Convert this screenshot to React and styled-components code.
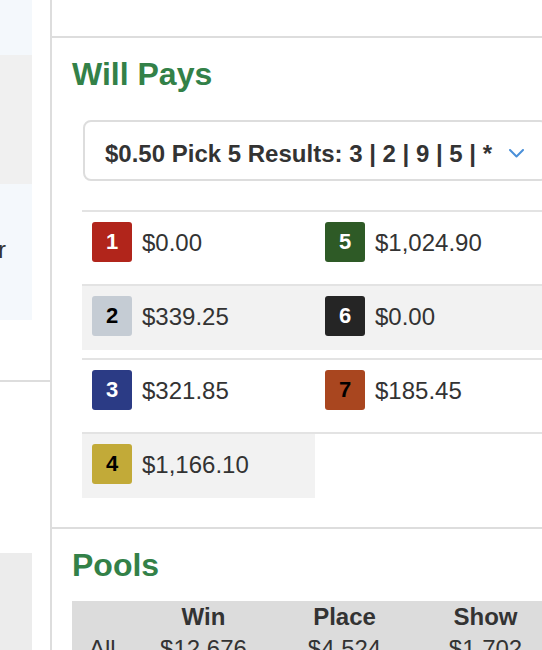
import styled, { createGlobalStyle } from 'styled-components';

const GlobalStyle = createGlobalStyle`
  html, body {
    margin: 0;
    padding: 0;
    background: #ffffff;
    overflow: hidden;
  }
  body {
    font-family: "Liberation Sans", Arial, Helvetica, sans-serif;
    color: #333333;
  }
`;

const Page = styled.div`
  display: flex;
  align-items: stretch;
  width: 640px;
  height: 700px;
`;

const SideColumn = styled.aside`
  flex: none;
  width: 50px;
  border-right: 2px solid #dddddd;
  display: flex;
  flex-direction: column;
  overflow: hidden;
`;

const SidePanel = styled.div`
  flex: none;
  width: 32px;
  height: ${(p) => p.$h}px;
  background: ${(p) => (p.$tone === 'blue' ? '#f4f8fc' : '#f0f0f0')};
  display: flex;
  justify-content: flex-end;
  align-items: center;
  overflow: hidden;
  box-sizing: border-box;
  padding: 0 26px 4px 0;
  font-size: 24px;
  white-space: nowrap;
`;

const SideSection = styled.div`
  margin-top: 60px;
  border-top: 2px solid #dddddd;
  flex: 1;
  display: flex;
  flex-direction: column;
`;

const SideCard = styled.div`
  margin-top: 171px;
  width: 32px;
  flex: 1;
  background: #ececec;
`;

const Main = styled.main`
  flex: none;
  width: 560px;
`;

const TopGap = styled.div`
  height: 36px;
`;

const Section = styled.section`
  border-top: 2px solid #dddddd;
  padding: 17px 0 21px 20px;
`;

const Heading = styled.h2`
  margin: 0;
  font-size: 32px;
  line-height: 38px;
  font-weight: 700;
  color: #338148;
`;

const Dropdown = styled.div`
  box-sizing: border-box;
  margin: 27px 0 0 11px;
  width: 465px;
  height: 61px;
  border: 2px solid #dddddd;
  border-radius: 8px;
  padding: 6px 22px 0 20px;
  display: flex;
  align-items: center;
  justify-content: space-between;
  font-size: 24px;
  font-weight: 700;
  color: #333333;
  white-space: nowrap;
`;

const Chevron = () => (
  <svg width="15" height="9" viewBox="0 0 15 9" fill="none">
    <polyline
      points="1,1 7.5,7.5 14,1"
      stroke="#4a90d9"
      strokeWidth="2"
      strokeLinecap="round"
      strokeLinejoin="round"
    />
  </svg>
);

const PayTable = styled.div`
  margin: 29px 0 0 10px;
  width: 466px;
`;

const PayRow = styled.div`
  display: grid;
  grid-template-columns: 233px 233px;
  border-top: 2px solid #e3e3e3;
  padding-bottom: 8px;
`;

const PayCell = styled.div`
  box-sizing: border-box;
  height: 64px;
  padding: 10px;
  display: flex;
  align-items: flex-start;
  gap: 10px;
  background: ${(p) => (p.$shaded ? '#f2f2f2' : 'transparent')};
`;

const Badge = styled.span`
  flex: none;
  width: 40px;
  height: 40px;
  border-radius: 3px;
  display: flex;
  align-items: center;
  justify-content: center;
  font-size: 22px;
  font-weight: 700;
  background: ${(p) => p.$bg};
  color: ${(p) => p.$fg};
`;

const Amount = styled.span`
  font-size: 24px;
  line-height: 42px;
  color: #333333;
`;

const PoolTable = styled.table`
  margin-top: 17px;
  width: 484px;
  table-layout: fixed;
  border-collapse: collapse;
  background: #dcdcdc;
  font-size: 24px;
  color: #333333;

  th,
  td {
    padding: 0;
    line-height: 32px;
    text-align: center;
  }
  th {
    font-weight: 700;
  }
`;

const RowLabel = styled.td`
  && {
    text-align: left;
    padding-left: 17px;
  }
`;

const runners = {
  1: { bg: '#b1251b', fg: '#ffffff' },
  2: { bg: '#c5ccd4', fg: '#000000' },
  3: { bg: '#2b3b85', fg: '#ffffff' },
  4: { bg: '#c2aa38', fg: '#000000' },
  5: { bg: '#2e5a26', fg: '#ffffff' },
  6: { bg: '#252525', fg: '#ffffff' },
  7: { bg: '#a9461f', fg: '#000000' },
};

const payRows = [
  [{ n: 1, pay: '$0.00' }, { n: 5, pay: '$1,024.90' }],
  [{ n: 2, pay: '$339.25' }, { n: 6, pay: '$0.00' }],
  [{ n: 3, pay: '$321.85' }, { n: 7, pay: '$185.45' }],
  [{ n: 4, pay: '$1,166.10' }],
];

const pools = [{ label: 'All', win: '$12,676', place: '$4,524', show: '$1,702' }];

export default function App() {
  return (
    <>
      <GlobalStyle />
      <Page>
        <SideColumn>
          <SidePanel $tone="blue" $h={55} />
          <SidePanel $tone="gray" $h={129} />
          <SidePanel $tone="blue" $h={136}>
            <span>Trainer</span>
          </SidePanel>
          <SideSection>
            <SideCard />
          </SideSection>
        </SideColumn>

        <Main>
          <TopGap />
          <Section>
            <Heading>Will Pays</Heading>
            <Dropdown>
              <span>$0.50 Pick 5 Results: 3 | 2 | 9 | 5 | *</span>
              <Chevron />
            </Dropdown>
            <PayTable>
              {payRows.map((row, i) => (
                <PayRow key={i}>
                  {row.map((item) => (
                    <PayCell key={item.n} $shaded={i % 2 === 1}>
                      <Badge $bg={runners[item.n].bg} $fg={runners[item.n].fg}>
                        {item.n}
                      </Badge>
                      <Amount>{item.pay}</Amount>
                    </PayCell>
                  ))}
                </PayRow>
              ))}
            </PayTable>
          </Section>

          <Section>
            <Heading>Pools</Heading>
            <PoolTable>
              <colgroup>
                <col style={{ width: 61 }} />
                <col style={{ width: 141 }} />
                <col style={{ width: 141 }} />
                <col style={{ width: 141 }} />
              </colgroup>
              <thead>
                <tr>
                  <th />
                  <th>Win</th>
                  <th>Place</th>
                  <th>Show</th>
                </tr>
              </thead>
              <tbody>
                {pools.map((p) => (
                  <tr key={p.label}>
                    <RowLabel>{p.label}</RowLabel>
                    <td>{p.win}</td>
                    <td>{p.place}</td>
                    <td>{p.show}</td>
                  </tr>
                ))}
              </tbody>
            </PoolTable>
          </Section>
        </Main>
      </Page>
    </>
  );
}
